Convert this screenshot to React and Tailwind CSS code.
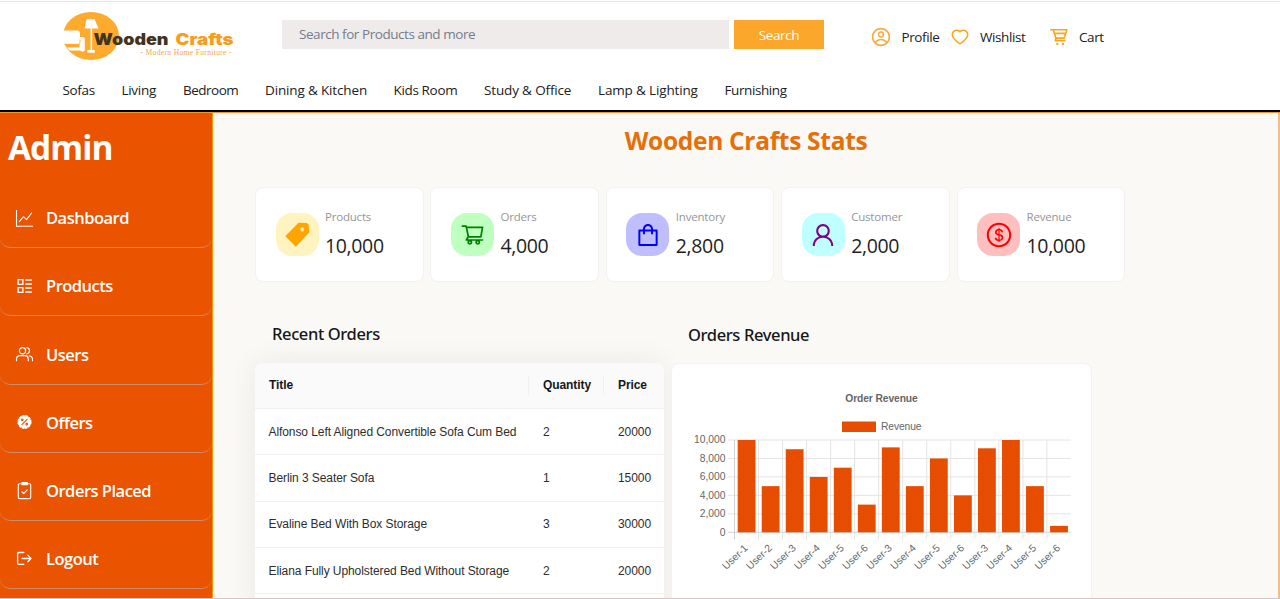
import React from "react";
import { CgProfile } from "react-icons/cg";
import {
  AiOutlineHeart,
  AiOutlineShoppingCart,
  AiOutlineShopping,
  AiOutlineUser,
  AiOutlineDollarCircle,
} from "react-icons/ai";

const categories = [
  { name: "Sofas", style: "w-[59px] tracking-[-0.35px]" },
  { name: "Living", style: "w-[61.5px] tracking-[-0.3px]" },
  { name: "Bedroom", style: "w-[82px] tracking-[-0.5px]" },
  { name: "Dining & Kitchen", style: "w-[128.5px] tracking-[-0.15px]" },
  { name: "Kids Room", style: "w-[90.5px] tracking-[-0.35px]" },
  { name: "Study & Office", style: "w-[114px] tracking-[-0.15px]" },
  { name: "Lamp & Lighting", style: "w-[126.5px] tracking-[-0.15px]" },
  { name: "Furnishing", style: "w-[80px] tracking-[-0.4px]" },
];

const stroke = {
  fill: "none",
  stroke: "currentColor",
  strokeLinecap: "round",
  strokeLinejoin: "round",
};

const ChartIcon = () => (
  <svg viewBox="0 0 18 18" className="w-[18px] h-[18px]" {...stroke} strokeWidth="1.1">
    <path d="M1.5 0v16.300H18M4.300 11.700l4.200-5 3 3L16.600 3" />
  </svg>
);

const ListIcon = () => (
  <svg viewBox="0 0 18 18" className="w-[18px] h-[18px]" {...stroke} strokeLinecap="butt" strokeLinejoin="miter" strokeWidth="1.3">
    <path d="M3.100 1.600h4.800v4.800H3.100zM3.100 9.600h4.800v4.800H3.100zM10.300 2H17M10.300 6H17M10.300 10H17M10.300 14H17" />
  </svg>
);

const UsersIcon = () => (
  <svg viewBox="0 0 18 18" className="w-[18px] h-[18px]" {...stroke} strokeWidth="1.2">
    <circle cx="7.5" cy="4.800" r="3.1" />
    <path d="M1.500 14.700v-1.500c0-2.200 1.600-3.600 3.600-3.600h4.600c2 0 3.600 1.400 3.600 3.600v1.500M11.800 1.700c3.600.5 3.600 5.700 0 6.200M14.300 9.900c2 .3 3.300 1.700 3.300 3.700v1.100" />
  </svg>
);

const OfferIcon = () => (
  <svg viewBox="0 0 18 18" className="w-[18px] h-[18px]">
    <circle cx="9.500" cy="8" r="6.200" fill="currentColor" stroke="currentColor" strokeWidth="1.7" strokeDasharray="2.600 .65" />
    <g fill="none" stroke="#ea5300" strokeWidth="1.1" strokeLinecap="round">
      <path d="m6.900 10.600 5.200-5.200" />
      <circle cx="7.300" cy="5.800" r=".8" />
      <circle cx="11.700" cy="10.200" r=".8" />
    </g>
  </svg>
);

const ClipboardIcon = () => (
  <svg viewBox="0 0 18 18" className="w-[18px] h-[18px]" {...stroke} strokeWidth="1.1">
    <path d="M6.500 1.800H4.600c-.9 0-1.300.5-1.300 1.300v12.200c0 .8.400 1.300 1.300 1.300h9.800c.9 0 1.300-.5 1.300-1.300V3.100c0-.8-.4-1.300-1.300-1.300h-1.900M7 9.800l1.800 1.700 3.400-3.700" />
    <path d="M6.800.6h5.400v2.100H6.800z" fill="currentColor" />
  </svg>
);

const LogoutIcon = () => (
  <svg viewBox="0 0 18 18" className="w-[18px] h-[18px]" {...stroke} strokeWidth="1.3">
    <path d="M8.800 1.500H3.700c-.6 0-1.100.4-1.100 1v9.800c0 .6.5 1 1.100 1h5.100M7 7.500h9M12.800 4.300 16 7.500l-3.200 3.200" />
  </svg>
);

const CartIcon = () => (
  <svg viewBox="0 0 18 18" className="w-[18px] h-[18px] text-[#faa41f]" {...stroke} strokeWidth="1.6">
    <path d="M.9 1.800h2.400l2.500 8.300h8.400l2.700-8.300H3.300M4.500 5.400h11M5.800 10.100l-.5 2.500h9.500" />
    <path d="M7.300 15.900h.1M12.900 15.900h.1" strokeWidth="2.300" />
  </svg>
);

const TagIcon = () => (
  <svg viewBox="0 0 28 28" className="w-7 h-7" fill="currentColor">
    <path fillRule="evenodd" d="M2.300 15.300 15.500 1.700l8.300.3 1.900 1.700.6 7.800-13.500 14.200zM19.300 6.600a1.900 1.900 0 1 0 .01 0z" />
  </svg>
);

const menu = [
  { label: "Dashboard", icon: <ChartIcon /> },
  { label: "Products", icon: <ListIcon /> },
  { label: "Users", icon: <UsersIcon /> },
  { label: "Offers", icon: <OfferIcon /> },
  { label: "Orders Placed", icon: <ClipboardIcon /> },
  { label: "Logout", icon: <LogoutIcon /> },
];

const stats = [
  { label: "Products", value: "10,000", tile: "bg-[#fff3bf] text-[#ffa500]", icon: <TagIcon /> },
  { label: "Orders", value: "4,000", tile: "bg-[#bfffbf] text-[#008000]", icon: <AiOutlineShoppingCart className="w-[25px] h-[25px]" /> },
  { label: "Inventory", value: "2,800", tile: "bg-[#bfbfff] text-[#0000ff]", icon: <AiOutlineShopping className="w-[28px] h-[28px]" /> },
  { label: "Customer", value: "2,000", tile: "bg-[#bfffff] text-[#800080]", icon: <AiOutlineUser className="w-[28px] h-[28px]" /> },
  { label: "Revenue", value: "10,000", tile: "bg-[#ffbfbf] text-[#ff0000]", icon: <AiOutlineDollarCircle className="w-[28px] h-[28px]" /> },
];

const orders = [
  { title: "Alfonso Left Aligned Convertible Sofa Cum Bed", quantity: 2, price: 20000 },
  { title: "Berlin 3 Seater Sofa", quantity: 1, price: 15000 },
  { title: "Evaline Bed With Box Storage", quantity: 3, price: 30000 },
  { title: "Eliana Fully Upholstered Bed Without Storage", quantity: 2, price: 20000 },
];

const revenue = [
  ["User-1", 10000],
  ["User-2", 5000],
  ["User-3", 9000],
  ["User-4", 6000],
  ["User-5", 7000],
  ["User-6", 3000],
  ["User-3", 9200],
  ["User-4", 5000],
  ["User-5", 8000],
  ["User-6", 4000],
  ["User-3", 9100],
  ["User-4", 10000],
  ["User-5", 5000],
  ["User-6", 700],
];

function Logo() {
  return (
    <svg width="176" height="52" viewBox="0 0 176 52" className="shrink-0">
      <ellipse cx="30" cy="26" rx="28" ry="24" fill="#fdaa2f" />
      <g fill="#fff">
        <path d="M25.500 9h8l4 9.500H23.600z" />
        <path d="M29.600 18h1.500v22h2.600v2.700H26.500V40h3.100z" />
        <path d="M0 23c0-1.700 1-2.500 2.500-2.500h14c1.800 0 2.500 1 2.500 2.500v4h2.500c1.500 0 2.300.8 2.300 2.300v10.500c0 2.500-4.300 2.500-4.300.8H9l-3-3h12.500v-3.600H3.500L0 30z" />
      </g>
      <path d="M3.500 34.300h13.500c1.500 0 2-.7 2-2v-3" fill="none" stroke="#fdaa2f" strokeWidth=".8" />
      <g fontFamily="Inter, sans-serif" fontWeight="900" fontSize="15.500">
        <text x="32.500" y="35" fill="#42331f" textLength="75" lengthAdjust="spacingAndGlyphs">Wooden</text>
        <text x="114.500" y="35" fill="#f99c1c" textLength="58" lengthAdjust="spacingAndGlyphs">Crafts</text>
      </g>
      <text x="79.500" y="45.300" fontFamily="Liberation Serif, serif" fontSize="7.600" fill="#f4a54a" textLength="91">
        - Modern Home Furniture -
      </text>
    </svg>
  );
}

function Header() {
  return (
    <header className="mt-px h-[111px] border-b-2 border-t border-b-black border-t-[#e6e6e6] bg-white">
      <div className="flex h-[68px] pl-[61px] pt-2">
        <Logo />
        <div className="ml-[45px] mt-2.5 flex h-[29px] w-[447px] items-center bg-[#efebea] pl-[17px] text-[13.500px] tracking-[-0.450px] text-[#747b90]">
          <span className="-mt-px">Search for Products and more</span>
        </div>
        <button className="ml-[5px] mt-2.5 h-[28.500px] w-[90px] bg-[#faa72c] pt-px text-[13.500px] tracking-[-0.400px] text-white">
          Search
        </button>
        <div className="mt-4 flex h-[22px] items-center text-[13.500px] tracking-[-0.400px] text-[#212121]">
          <div className="ml-[47px] flex w-[79px] items-center">
            <CgProfile className="mr-[10.500px] h-5 w-5 text-[#faa840]" />
            Profile
          </div>
          <div className="flex w-[99.500px] items-center">
            <AiOutlineHeart className="mr-[10px] h-5 w-5 shrink-0 text-[#faa41f]" />
            Wishlist
          </div>
          <div className="flex items-center gap-[11.500px]">
            <CartIcon />
            Cart
          </div>
        </div>
      </div>
      <nav className="flex pl-[62.500px] pt-2.5 text-[13.500px] leading-5 text-[#212121]">
        {categories.map((item) => (
          <span key={item.name} className={`${item.style} shrink-0 whitespace-nowrap`}>
            {item.name}
          </span>
        ))}
      </nav>
    </header>
  );
}

function Sidebar() {
  return (
    <aside className="h-full w-[213px] shrink-0 border-r border-[#ff9800] bg-[#ea5300] text-white">
      <h1 className="h-[67px] pl-2 pt-[11px] text-[33.500px] font-bold leading-[46px] tracking-[-1px]">Admin</h1>
      {menu.map((item) => (
        <div key={item.label} className="flex h-[68.200px] items-center rounded-b-[10px] border-b border-[#d18a66] pl-[15px] pt-[10px]">
          <span className="flex w-[31px] shrink-0">{item.icon}</span>
          <span className="text-[16.500px] font-semibold tracking-[-0.500px]">{item.label}</span>
        </div>
      ))}
    </aside>
  );
}

function StatCard({ stat }) {
  return (
    <div className="flex h-[95px] w-[168.500px] items-center rounded-lg border border-[#f3f2f2] bg-white pl-[19.500px]">
      <div className={`flex h-[43px] w-[43px] items-center justify-center rounded-2xl ${stat.tile}`}>{stat.icon}</div>
      <div className="ml-[6.500px]">
        <p className="text-[11.500px] leading-[20px] tracking-[-0.200px] text-[#969696]">{stat.label}</p>
        <p className="pt-[3px] text-[19.500px] leading-[32px] tracking-[-0.350px] text-[#1f1f1f]">{stat.value}</p>
      </div>
    </div>
  );
}

function OrdersTable() {
  return (
    <div className="h-[260px] w-[409px] overflow-hidden rounded-t-lg bg-white font-['Liberation_Sans',Arial,sans-serif] text-[12px] tracking-[-0.080px] text-[#2d2d2d] shadow-[0_0_30px_rgba(0,0,0,0.07)]">
      <div className="flex h-[46px] items-center border-b border-[#f0f0f0] bg-[#fafafa] font-bold text-[#171717]">
        <span className="w-[273px] pl-[14px]">Title</span>
        <span className="w-[75px] border-l border-[#f0f0f0] pl-[14px] leading-5">Quantity</span>
        <span className="w-[61px] border-l border-[#f0f0f0] pl-[14px] leading-5">Price</span>
      </div>
      {orders.map((order) => (
        <div key={order.title} className="flex h-[46.300px] items-center border-b border-[#f0f0f0]">
          <span className="w-[274px] whitespace-nowrap pl-[13.500px]">{order.title}</span>
          <span className="w-[75px] pl-[14px]">{order.quantity}</span>
          <span className="pl-[14px]">{order.price}</span>
        </div>
      ))}
    </div>
  );
}

function RevenueChart() {
  const left = 61.5;
  const top = 76;
  const height = 92.3;
  const step = 24.03;
  const bottom = top + height;

  return (
    <svg width="418" height="234" viewBox="0 0 418 234" fontFamily="Liberation Sans, Arial, sans-serif" fontSize="10.300" fill="#666">
      <text x="208.500" y="38" textAnchor="middle" fontWeight="bold" textLength="72.500">Order Revenue</text>
      <rect x="169" y="57.500" width="34" height="10.500" fill="#e64d00" />
      <text x="208" y="66" textLength="40.500">Revenue</text>
      {[0, 2000, 4000, 6000, 8000, 10000].map((tick) => {
        const y = bottom - (tick / 10000) * height;
        return (
          <g key={tick}>
            <line x1={left - 7} x2={left + step * 14} y1={y} y2={y} stroke={tick ? "#e4e4e4" : "#d0d0d0"} />
            <text x="52.500" y={y + 3.2} textAnchor="end">{tick.toLocaleString("en-US")}</text>
          </g>
        );
      })}
      {revenue.map(([user, value], i) => {
        const x = left + i * step;
        const h = (value / 10000) * height;
        return (
          <g key={i}>
            <line x1={x} x2={x} y1={top} y2={bottom + 7} stroke={i ? "#e4e4e4" : "#d0d0d0"} />
            <rect x={x + 3.2} y={bottom - h} width="17.800" height={h} fill="#e64d00" />
            <text transform={`translate(${x + 14} ${bottom + 16.5}) rotate(-44)`} textAnchor="end">{user}</text>
          </g>
        );
      })}
    </svg>
  );
}

export default function App() {
  return (
    <div className="flex h-[599px] w-[1280px] flex-col overflow-hidden border-b border-[#d2c6c6] bg-white font-['Open_Sans','Segoe_UI',sans-serif]">
      <div className="h-[112px] shrink-0">
        <Header />
      </div>
      <div className="flex min-h-0 flex-1 border-t border-[#f0953a]">
        <Sidebar />
        <main className="flex-1 border-r-2 border-[#f3bd8c] bg-[#faf9f6] pl-[42px]">
          <h2 className="w-[982px] pt-[10px] text-center text-[24.500px] font-bold leading-9 tracking-[-0.300px] text-[#e66f08]">
            Wooden Crafts Stats
          </h2>
          <div className="mt-[28.300px] flex gap-[6.900px]">
            {stats.map((stat) => (
              <StatCard key={stat.label} stat={stat} />
            ))}
          </div>
          <div className="mt-[37.700px] flex gap-[7px]">
            <section>
              <h3 className="h-[43px] pl-[17px] font-['Noto_Sans','Segoe_UI',sans-serif] text-[16.500px] font-medium leading-[27px] tracking-[-0.380px] text-[#171717]">Recent Orders</h3>
              <OrdersTable />
            </section>
            <section>
              <h3 className="h-[43px] pl-[17px] pt-px font-['Noto_Sans','Segoe_UI',sans-serif] text-[16.500px] font-medium leading-[27px] tracking-[-0.380px] text-[#171717]">Orders Revenue</h3>
              <div className="h-[260px] w-[421px] rounded-lg border border-[#f3f2f2] bg-white pl-px">
                <RevenueChart />
              </div>
            </section>
          </div>
        </main>
      </div>
    </div>
  );
}
